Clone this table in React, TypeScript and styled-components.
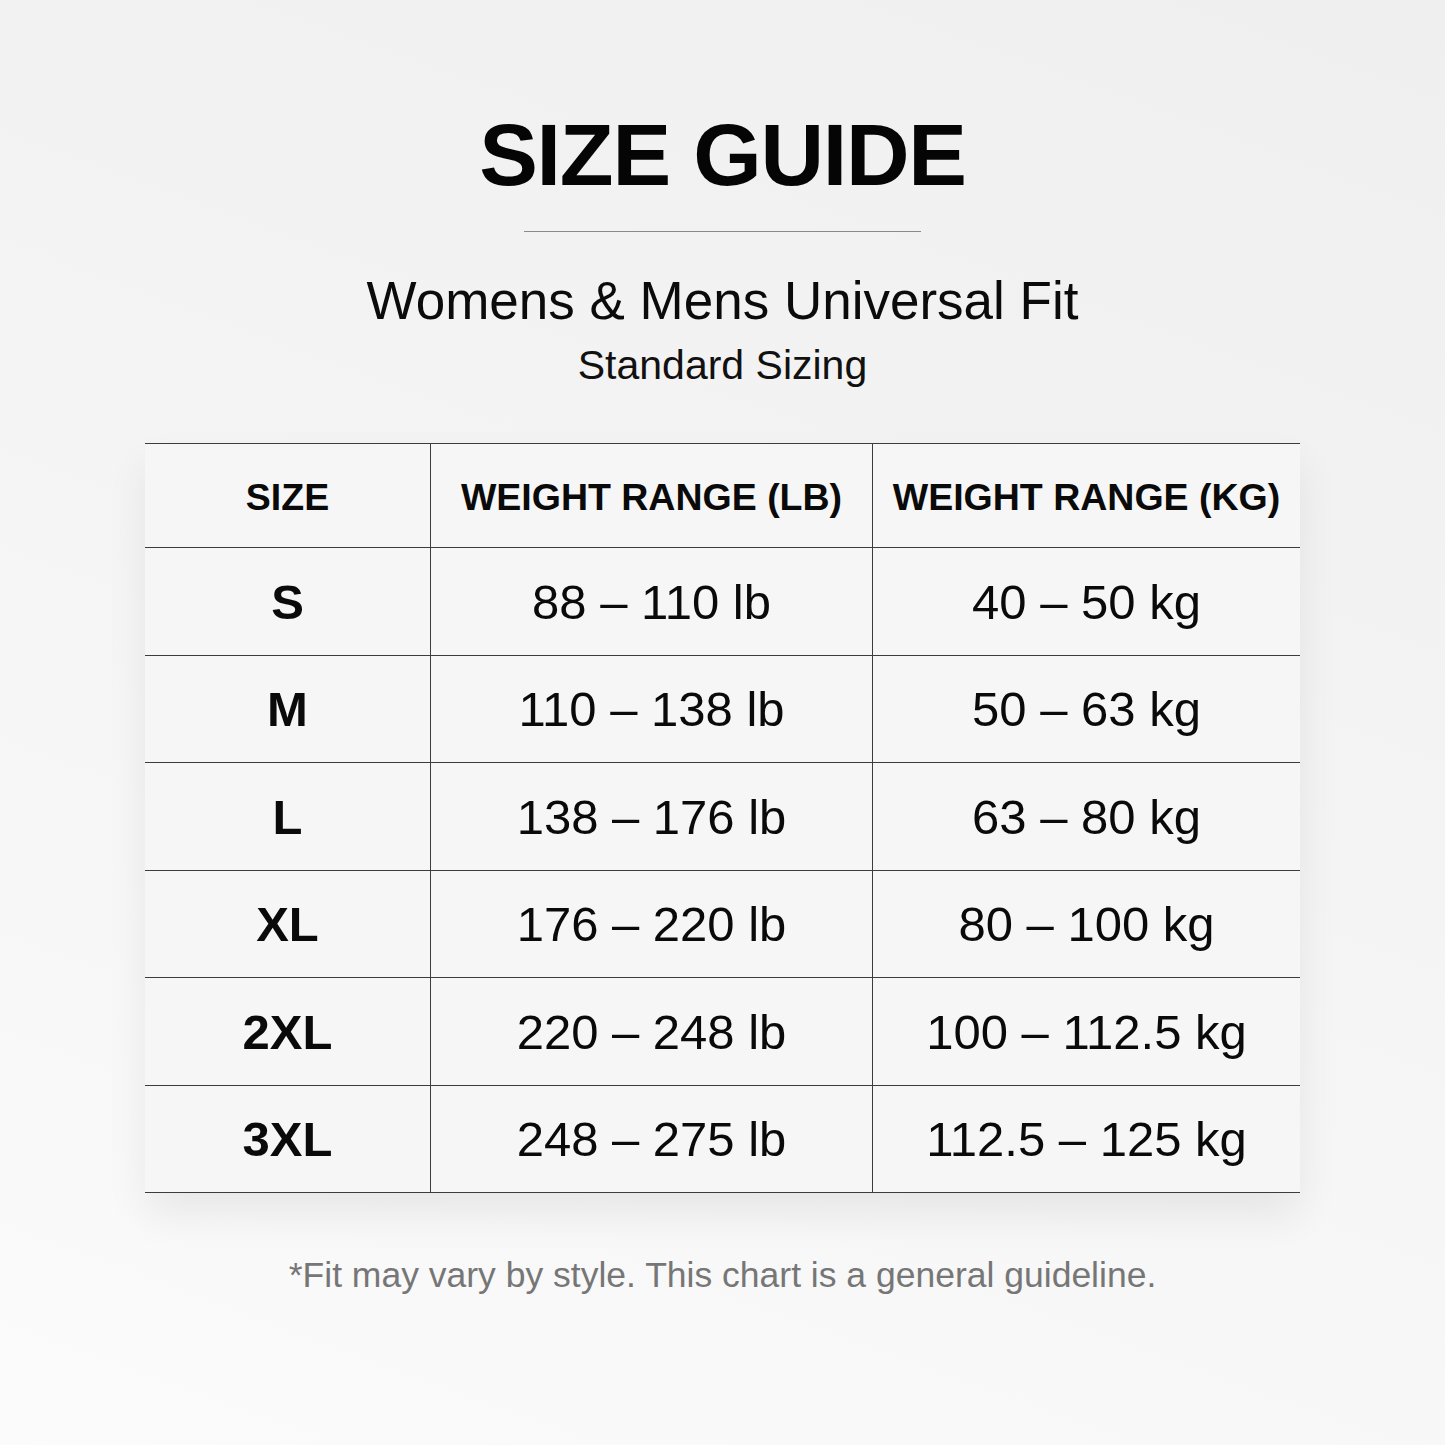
import React from "react";
import styled, { createGlobalStyle } from "styled-components";

const GlobalStyle = createGlobalStyle`
  html, body {
    margin: 0;
    padding: 0;
  }
  body {
    font-family: "Liberation Sans", Arial, sans-serif;
    color: #0b0b0b;
  }
`;

const Page = styled.div`
  width: 1445px;
  min-height: 1445px;
  box-sizing: border-box;
  padding-top: 111px;
  display: flex;
  flex-direction: column;
  align-items: center;
  background: linear-gradient(200deg, #efefef 0%, #f4f4f4 45%, #fbfbfb 100%);
`;

const Title = styled.h1`
  margin: 0;
  font-size: 88px;
  line-height: 1;
  font-weight: 700;
  letter-spacing: -1.2px;
  color: #050505;
`;

const Divider = styled.hr`
  width: 397px;
  height: 1px;
  margin: 32px 0 0;
  border: none;
  background: #8a8a8a;
`;

const Subtitle = styled.h2`
  margin: 42px 0 0;
  font-size: 53px;
  line-height: 1;
  font-weight: 400;
  color: #0b0b0b;
`;

const Caption = styled.p`
  margin: 18px 0 0;
  font-size: 41px;
  line-height: 1;
  color: #111;
`;

const Table = styled.div`
  margin-top: 57px;
  width: 1155px;
  display: grid;
  grid-template-columns: 286px 442px 427px;
  background: #f6f6f6;
  border-top: 1px solid #3c3c3c;
  box-shadow: 0 22px 40px rgba(0, 0, 0, 0.07);
`;

interface ICell {
  head?: boolean;
  bold?: boolean;
  last?: boolean;
}

const Cell = styled.div<ICell>`
  height: ${(props) => (props.head ? "104px" : "107.5px")};
  box-sizing: border-box;
  padding-top: ${(props) => (props.head ? "3px" : "1px")};
  display: flex;
  align-items: center;
  justify-content: center;
  border-bottom: 1px solid #3c3c3c;
  border-right: ${(props) => (props.last ? "none" : "1px solid #3c3c3c")};
  font-size: ${(props) => (props.head ? "37.5px" : "49px")};
  font-weight: ${(props) => (props.bold || props.head ? 700 : 400)};
  color: #0a0a0a;
  white-space: nowrap;
`;

const Footnote = styled.p`
  margin: 65px 0 0;
  font-size: 35.5px;
  line-height: 1;
  color: #767676;
`;

const rows = [
  ["S", "88 – 110 lb", "40 – 50 kg"],
  ["M", "110 – 138 lb", "50 – 63 kg"],
  ["L", "138 – 176 lb", "63 – 80 kg"],
  ["XL", "176 – 220 lb", "80 – 100 kg"],
  ["2XL", "220 – 248 lb", "100 – 112.5 kg"],
  ["3XL", "248 – 275 lb", "112.5 – 125 kg"],
];

const App: React.FC = () => {
  return (
    <>
      <GlobalStyle />
      <Page>
        <Title>SIZE GUIDE</Title>
        <Divider />
        <Subtitle>Womens &amp; Mens Universal Fit</Subtitle>
        <Caption>Standard Sizing</Caption>
        <Table>
          <Cell head>SIZE</Cell>
          <Cell head>WEIGHT RANGE (LB)</Cell>
          <Cell head last>
            WEIGHT RANGE (KG)
          </Cell>
          {rows.map(([size, lb, kg]) => (
            <React.Fragment key={size}>
              <Cell bold>{size}</Cell>
              <Cell>{lb}</Cell>
              <Cell last>{kg}</Cell>
            </React.Fragment>
          ))}
        </Table>
        <Footnote>*Fit may vary by style. This chart is a general guideline.</Footnote>
      </Page>
    </>
  );
};

export default App;
